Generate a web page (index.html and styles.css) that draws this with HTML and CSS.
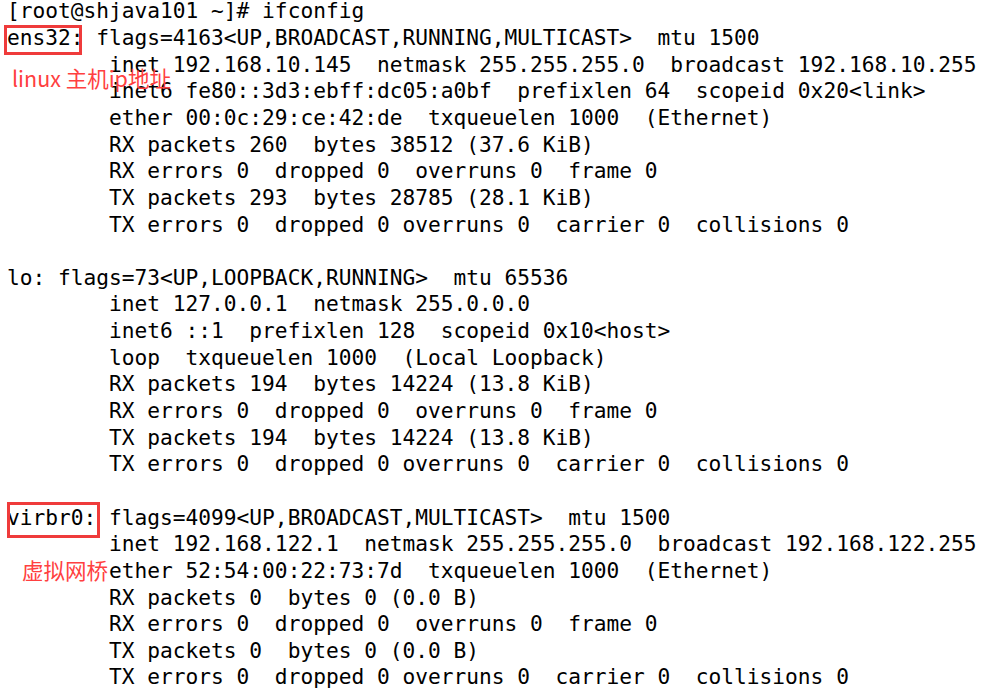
FILE: index.html
```html
<!DOCTYPE html>
<html>
<head>
<meta charset="utf-8">
<link rel="stylesheet" href="styles.css">
</head>
<body>
<div class="canvas">
<pre class="term">[root@shjava101 ~]# ifconfig
ens32: flags=4163&lt;UP,BROADCAST,RUNNING,MULTICAST&gt;  mtu 1500
        inet 192.168.10.145  netmask 255.255.255.0  broadcast 192.168.10.255
        inet6 fe80::3d3:ebff:dc05:a0bf  prefixlen 64  scopeid 0x20&lt;link&gt;
        ether 00:0c:29:ce:42:de  txqueuelen 1000  (Ethernet)
        RX packets 260  bytes 38512 (37.6 KiB)
        RX errors 0  dropped 0  overruns 0  frame 0
        TX packets 293  bytes 28785 (28.1 KiB)
        TX errors 0  dropped 0 overruns 0  carrier 0  collisions 0

lo: flags=73&lt;UP,LOOPBACK,RUNNING&gt;  mtu 65536
        inet 127.0.0.1  netmask 255.0.0.0
        inet6 ::1  prefixlen 128  scopeid 0x10&lt;host&gt;
        loop  txqueuelen 1000  (Local Loopback)
        RX packets 194  bytes 14224 (13.8 KiB)
        RX errors 0  dropped 0  overruns 0  frame 0
        TX packets 194  bytes 14224 (13.8 KiB)
        TX errors 0  dropped 0 overruns 0  carrier 0  collisions 0

virbr0: flags=4099&lt;UP,BROADCAST,MULTICAST&gt;  mtu 1500
        inet 192.168.122.1  netmask 255.255.255.0  broadcast 192.168.122.255
        ether 52:54:00:22:73:7d  txqueuelen 1000  (Ethernet)
        RX packets 0  bytes 0 (0.0 B)
        RX errors 0  dropped 0  overruns 0  frame 0
        TX packets 0  bytes 0 (0.0 B)
        TX errors 0  dropped 0 overruns 0  carrier 0  collisions 0</pre>
<div class="mark mark-ens"></div>
<div class="mark mark-virbr"></div>
<div class="note note-ens">linux 主机ip地址</div>
<div class="note note-virbr">虚拟网桥</div>
</div>
</body>
</html>
```
FILE: styles.css
```css
html, body {
  margin: 0;
  padding: 0;
  background: #ffffff;
}
.canvas {
  position: relative;
  width: 984px;
  height: 694px;
  overflow: hidden;
}
.term {
  margin: -1.6px 0 0 0;
  padding: 0 0 0 7px;
  font-family: "DejaVu Sans Mono", monospace;
  font-size: 21.2px;
  line-height: 26.64px;
  color: #000000;
  white-space: pre;
}
.mark {
  position: absolute;
  box-sizing: border-box;
  border: 3px solid #ef3b3b;
}
.mark-ens {
  left: 4px;
  top: 25px;
  width: 78px;
  height: 30px;
}
.mark-virbr {
  left: 7px;
  top: 502px;
  width: 93px;
  height: 36px;
}
.note {
  position: absolute;
  font-family: "Noto Sans CJK SC", "Noto Sans", sans-serif;
  font-size: 21.5px;
  line-height: 21px;
  color: #ff4040;
  white-space: nowrap;
}
.note-ens {
  left: 12px;
  top: 67px;
}
.note-virbr {
  left: 22px;
  top: 559px;
}
```
